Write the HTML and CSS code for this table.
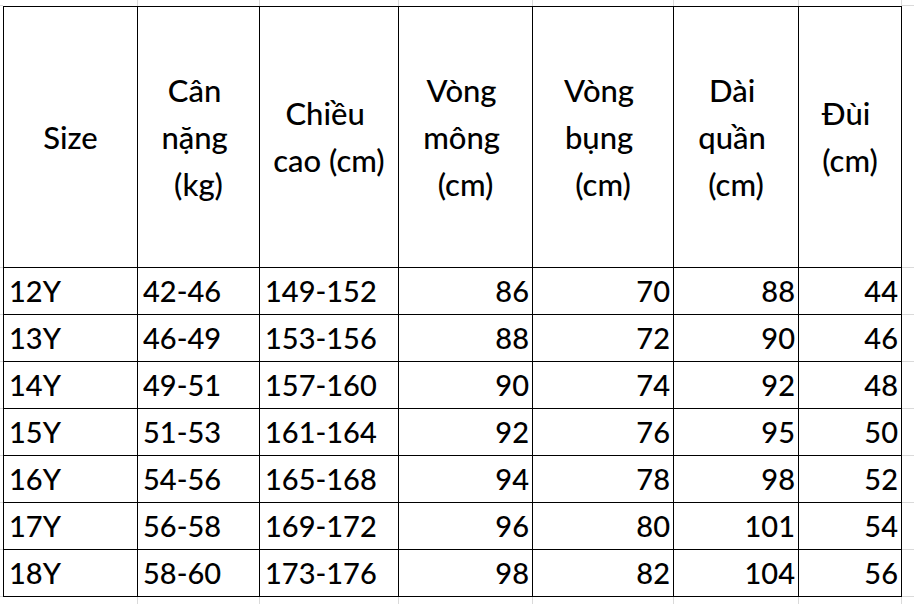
FILE: index.html
```html
<!DOCTYPE html>
<html lang="vi">
<head>
<meta charset="utf-8">
<title>Bảng size</title>
<link rel="stylesheet" href="styles.css">
</head>
<body>
<div class="sheet">
  <div class="g gl"></div><div class="g gt"></div><div class="g gt"></div><div class="g gt"></div><div class="g gt"></div><div class="g gt"></div><div class="g gt"></div><div class="g gt"></div><div class="g gr0"></div>

  <div class="g gl"></div>
  <div class="c h first">Size</div>
  <div class="c h">Cân 
nặng 
(kg)</div>
  <div class="c h">Chiều 
cao (cm)</div>
  <div class="c h">Vòng 
mông 
(cm)</div>
  <div class="c h">Vòng 
bụng 
(cm)</div>
  <div class="c h">Dài 
quần 
(cm)</div>
  <div class="c h">Đùi 
(cm)</div>
  <div class="g gr"></div>

  <div class="g gl"></div><div class="c d first">12Y</div><div class="c d">42-46</div><div class="c d">149-152</div><div class="c d n">86</div><div class="c d n">70</div><div class="c d n">88</div><div class="c d n">44</div><div class="g gr"></div>
  <div class="g gl"></div><div class="c d first">13Y</div><div class="c d">46-49</div><div class="c d">153-156</div><div class="c d n">88</div><div class="c d n">72</div><div class="c d n">90</div><div class="c d n">46</div><div class="g gr"></div>
  <div class="g gl"></div><div class="c d first">14Y</div><div class="c d">49-51</div><div class="c d">157-160</div><div class="c d n">90</div><div class="c d n">74</div><div class="c d n">92</div><div class="c d n">48</div><div class="g gr"></div>
  <div class="g gl"></div><div class="c d first">15Y</div><div class="c d">51-53</div><div class="c d">161-164</div><div class="c d n">92</div><div class="c d n">76</div><div class="c d n">95</div><div class="c d n">50</div><div class="g gr"></div>
  <div class="g gl"></div><div class="c d first">16Y</div><div class="c d">54-56</div><div class="c d">165-168</div><div class="c d n">94</div><div class="c d n">78</div><div class="c d n">98</div><div class="c d n">52</div><div class="g gr"></div>
  <div class="g gl"></div><div class="c d first">17Y</div><div class="c d">56-58</div><div class="c d">169-172</div><div class="c d n">96</div><div class="c d n">80</div><div class="c d n">101</div><div class="c d n">54</div><div class="g gr"></div>
  <div class="g gl"></div><div class="c d first">18Y</div><div class="c d">58-60</div><div class="c d">173-176</div><div class="c d n">98</div><div class="c d n">82</div><div class="c d n">104</div><div class="c d n">56</div><div class="g gr"></div>

  <div class="g gb"></div><div class="g gb gbc"></div><div class="g gb gbc"></div><div class="g gb gbc"></div><div class="g gb gbc"></div><div class="g gb gbc"></div><div class="g gb gbc"></div><div class="g gb gbc"></div><div class="g gb"></div>
</div>
</body>
</html>
```

FILE: styles.css
```css
html, body {
  margin: 0;
  padding: 0;
  background: #ffffff;
}

body {
  font-family: Lato, "Open Sans", "Liberation Sans", sans-serif;
  color: #000000;
}

.sheet {
  display: grid;
  grid-template-columns: 3px 135px 122px 139px 134px 141px 125px 103px 1fr;
  grid-template-rows: 6px 262px repeat(7, 47px) 1fr;
  width: 914px;
  height: 604px;
  overflow: hidden;
}

.g,
.c {
  box-sizing: border-box;
}

/* faint spreadsheet gridlines outside the table */
.gl {
  border-bottom: 1px solid #dadada;
}

.gt {
  border-right: 1px solid #dadada;
}

.gr0,
.gr {
  border-bottom: 1px solid #dadada;
}

.gbc {
  border-right: 1px solid #dadada;
}

/* table cells */
.c {
  border-right: 1px solid #000000;
  border-bottom: 1px solid #000000;
  font-size: 29px;
  font-weight: 500;
  white-space: pre;
}

.c.first {
  border-left: 1px solid #000000;
}

.h {
  border-top: 1px solid #000000;
  display: flex;
  align-items: center;
  justify-content: center;
  text-align: center;
  font-size: 31px;
  line-height: 47px;
}

.d {
  line-height: 46px;
  padding-left: 5px;
  padding-right: 3px;
}

.d.n {
  text-align: right;
}
```
